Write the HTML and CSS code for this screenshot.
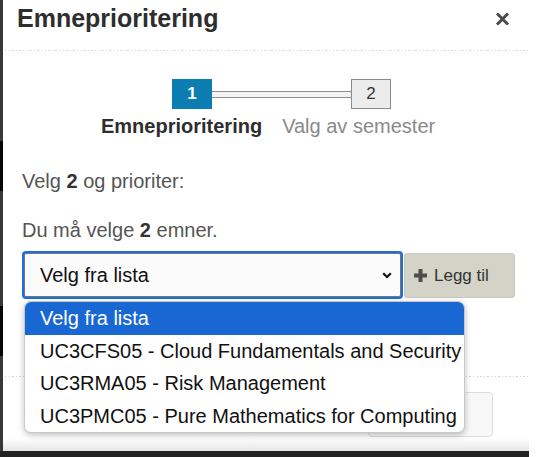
FILE: index.html
```html
<!DOCTYPE html>
<html lang="no">
<head>
<meta charset="utf-8">
<title>Emneprioritering</title>
<link rel="stylesheet" href="styles.css">
</head>
<body>
<div class="screen">
  <div class="row">
    <div class="edge"></div>
    <div class="modal">
      <header class="modal-header">
        <h2 class="modal-title">Emneprioritering</h2>
        <button class="close" aria-label="Lukk">
          <svg width="13" height="12" viewBox="0 0 13 12"><path d="M2 1.5 L11 10.5 M11 1.5 L2 10.5" stroke="#4a4a4a" stroke-width="3" stroke-linecap="square"/></svg>
        </button>
      </header>
      <div class="sep"></div>
      <div class="modal-body">
        <div class="stepper">
          <div class="track">
            <div class="step step-active">1</div>
            <div class="connector"></div>
            <div class="step step-next">2</div>
          </div>
          <div class="labels">
            <span class="label label-active">Emneprioritering</span>
            <span class="label label-next">Valg av semester</span>
          </div>
        </div>
        <p class="text first">Velg <b>2</b> og prioriter:</p>
        <p class="text second">Du må velge <b>2</b> emner.</p>
        <div class="picker">
          <div class="select">
            <span class="select-value">Velg fra lista</span>
            <svg class="chev" width="10" height="7" viewBox="0 0 10 7"><path d="M1.2 1.2 L5 5 L8.8 1.2" fill="none" stroke="#111" stroke-width="2.2"/></svg>
          </div>
          <button class="add">
            <svg class="plus" width="13" height="13" viewBox="0 0 13 13"><path d="M4.5 0 H8.5 V4.5 H13 V8.5 H8.5 V13 H4.5 V8.5 H0 V4.5 H4.5 Z" fill="#4d4d4d"/></svg>
            <span>Legg til</span>
          </button>
          <ul class="dropdown">
            <li class="opt opt-selected">Velg fra lista</li>
            <li class="opt">UC3CFS05 - Cloud Fundamentals and Security</li>
            <li class="opt">UC3RMA05 - Risk Management</li>
            <li class="opt">UC3PMC05 - Pure Mathematics for Computing</li>
          </ul>
        </div>
      </div>
      <div class="sep"></div>
      <footer class="modal-footer">
        <button class="footer-btn" aria-label="Neste"></button>
      </footer>
    </div>
  </div>
  <div class="band"></div>
</div>
</body>
</html>
```
FILE: styles.css
```css
html, body {
  margin: 0;
  padding: 0;
  background: #ffffff;
}
body {
  font-family: "Liberation Sans", Arial, sans-serif;
  color: #333;
  width: 543px;
  height: 457px;
  overflow: hidden;
}
.screen {
  width: 529px;
  display: flex;
  flex-direction: column;
}
.row {
  display: flex;
  height: 451px;
}
.edge {
  width: 3px;
  flex: none;
  background: linear-gradient(to bottom,
    #383838 0, #383838 141px,
    #050505 141px, #050505 191px,
    #383838 191px, #383838 306px,
    #050505 306px, #050505 356px,
    #383838 356px, #383838 100%);
}
.modal {
  flex: 1;
  background: #fff;
  display: flex;
  flex-direction: column;
}
.modal-header {
  display: flex;
  justify-content: space-between;
  align-items: flex-start;
  padding: 3px 20px 0 14px;
  height: 49px;
  box-sizing: border-box;
}
.modal-title {
  margin: 0;
  font-size: 25px;
  line-height: 30px;
  font-weight: bold;
  color: #2e2e2e;
}
.close {
  border: 0;
  background: none;
  padding: 0;
  margin-top: 10px;
  width: 13px;
  height: 12px;
  display: block;
}
.close svg { display: block; }
.sep {
  height: 1px;
  margin: 1px 0 1px 2px;
  background: repeating-linear-gradient(90deg, #d4d4d4 0, #d4d4d4 1.5px, transparent 1.5px, transparent 3.6px);
}
.modal-body {
  padding: 0 0 0 19px;
  height: 323px;
  box-sizing: border-box;
}
.stepper {
  padding-top: 27px;
}
.track {
  display: flex;
  align-items: center;
  margin-left: 150px;
}
.step {
  width: 40px;
  height: 30px;
  box-sizing: border-box;
  display: flex;
  align-items: center;
  justify-content: center;
  font-size: 17px;
}
.step-active {
  background: #0b7db1;
  color: #fff;
  font-weight: bold;
}
.step-next {
  background: #ececec;
  border: 1px solid #8a8a8a;
  color: #333;
}
.connector {
  width: 139px;
  height: 7px;
  box-sizing: border-box;
  border-top: 1px solid #8e8e8e;
  border-bottom: 1px solid #8e8e8e;
  background: #f3f3f3;
}
.labels {
  display: flex;
  gap: 20px;
  margin-top: 5px;
  margin-left: 79px;
  font-size: 20px;
  line-height: 24px;
}
.label-active {
  font-weight: bold;
  color: #2e2e2e;
}
.label-next {
  color: #8a8a8a;
}
.text {
  margin: 0;
  font-size: 20px;
  line-height: 24px;
  color: #555;
}
.text b { color: #333; }
.first { margin-top: 31px; }
.second { margin-top: 25px; }
.picker {
  position: relative;
  display: flex;
  margin-top: 11px;
  margin-left: 2px;
}
.select {
  width: 377px;
  height: 44px;
  box-sizing: border-box;
  border: 1px solid #767676;
  border-radius: 2px;
  box-shadow: 0 0 0 2px #1b6fe0;
  background: #fbfbfb;
  display: flex;
  align-items: center;
  justify-content: space-between;
  padding: 0 8px 0 15px;
}
.select-value {
  font-size: 20px;
  line-height: 24px;
  color: #111;
}
.chev { display: block; }
.add {
  margin-left: 3px;
  width: 111px;
  height: 45px;
  box-sizing: border-box;
  border: 1px solid #c9c8bd;
  border-radius: 3px;
  background: #d4d3c8;
  display: flex;
  align-items: center;
  gap: 7px;
  padding: 0 0 0 9px;
  font-family: "Liberation Sans", Arial, sans-serif;
  font-size: 17px;
  color: #333;
}
.plus { display: block; }
.dropdown {
  position: absolute;
  top: 48px;
  left: 0;
  width: 441px;
  margin: 0;
  padding: 0;
  list-style: none;
  background: #fff;
  border: 1px solid #c8c8c8;
  border-radius: 7px;
  box-shadow: 0 2px 6px rgba(0,0,0,0.25);
  overflow: hidden;
  box-sizing: border-box;
}
.opt {
  height: 32.5px;
  line-height: 32.5px;
  padding-left: 15px;
  font-size: 20px;
  color: #111;
  white-space: nowrap;
}
.opt-selected {
  background: #1967d2;
  color: #fff;
}
.modal-footer {
  flex: 1;
  padding: 14px 0 0 365px;
  background: linear-gradient(to bottom, #fff 0, #fff 60px, #e6e6e6 100%);
}
.footer-btn {
  display: block;
  width: 125px;
  height: 45px;
  border: 1px solid #dedede;
  border-radius: 4px;
  background: #f8f8f8;
}
.band {
  height: 6px;
  background: #222;
}
```
